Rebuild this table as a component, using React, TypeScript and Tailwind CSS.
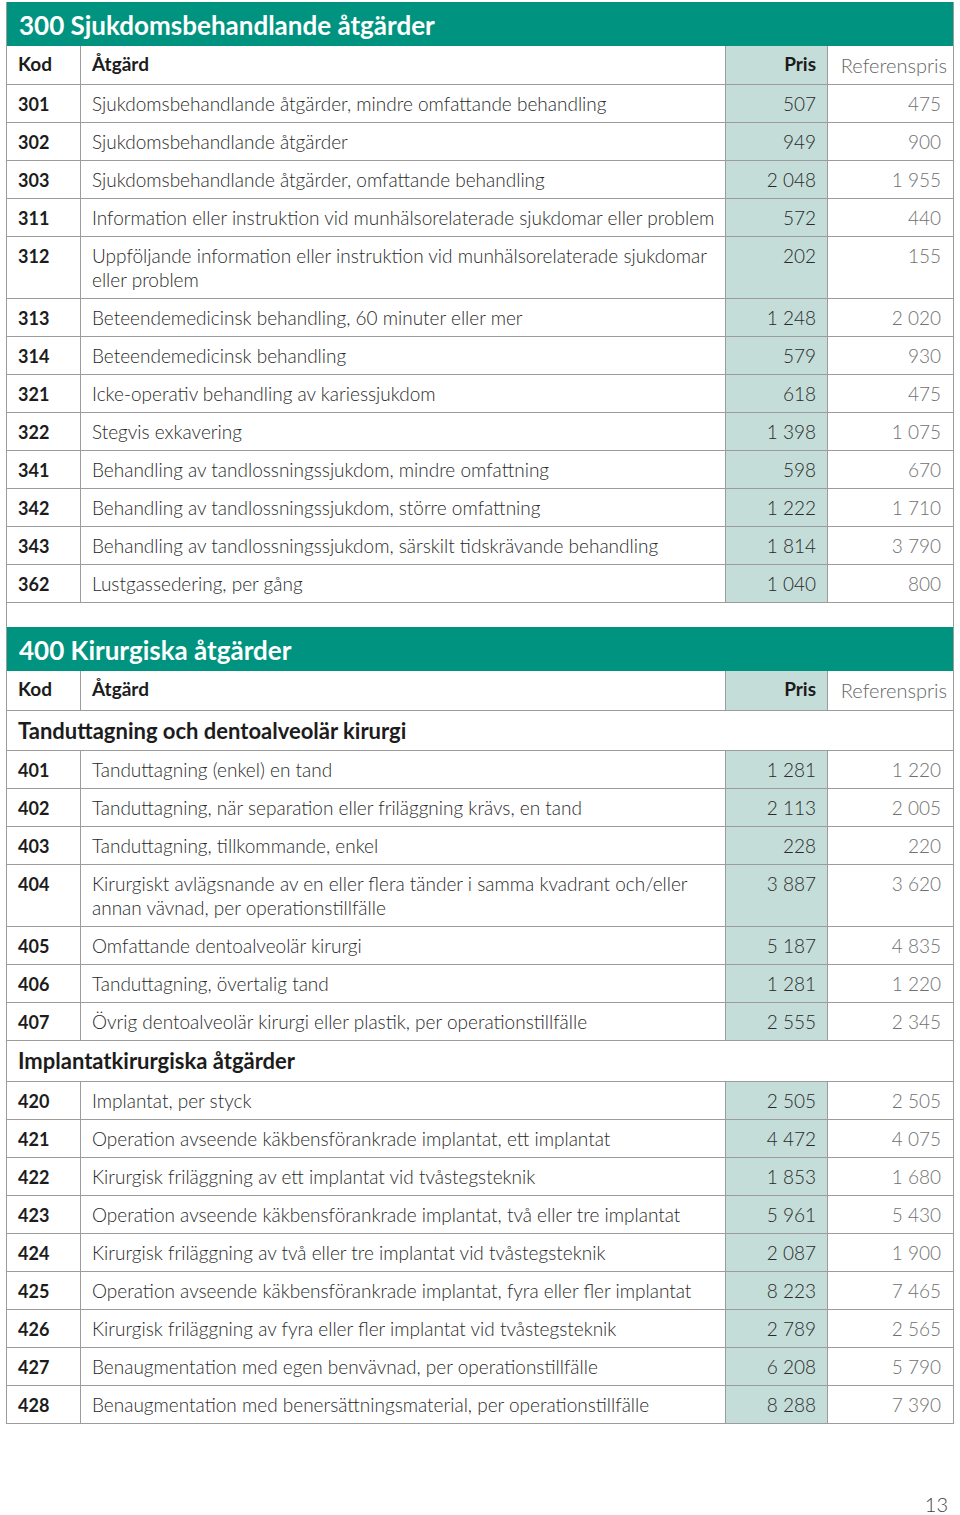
type Row = { kod: string; text: string; pris: string; ref: string };
type Item = Row | { sub: string; tall?: boolean };

const sec300: Item[] = [
  { kod: "301", text: "Sjukdomsbehandlande åtgärder, mindre omfattande behandling", pris: "507", ref: "475" },
  { kod: "302", text: "Sjukdomsbehandlande åtgärder", pris: "949", ref: "900" },
  { kod: "303", text: "Sjukdomsbehandlande åtgärder, omfattande behandling", pris: "2 048", ref: "1 955" },
  { kod: "311", text: "Information eller instruktion vid munhälsorelaterade sjukdomar eller problem", pris: "572", ref: "440" },
  { kod: "312", text: "Uppföljande information eller instruktion vid munhälsorelaterade sjukdomar eller problem", pris: "202", ref: "155" },
  { kod: "313", text: "Beteendemedicinsk behandling, 60 minuter eller mer", pris: "1 248", ref: "2 020" },
  { kod: "314", text: "Beteendemedicinsk behandling", pris: "579", ref: "930" },
  { kod: "321", text: "Icke-operativ behandling av kariessjukdom", pris: "618", ref: "475" },
  { kod: "322", text: "Stegvis exkavering", pris: "1 398", ref: "1 075" },
  { kod: "341", text: "Behandling av tandlossningssjukdom, mindre omfattning", pris: "598", ref: "670" },
  { kod: "342", text: "Behandling av tandlossningssjukdom, större omfattning", pris: "1 222", ref: "1 710" },
  { kod: "343", text: "Behandling av tandlossningssjukdom, särskilt tidskrävande behandling", pris: "1 814", ref: "3 790" },
  { kod: "362", text: "Lustgassedering, per gång", pris: "1 040", ref: "800" },
];

const sec400: Item[] = [
  { sub: "Tanduttagning och dentoalveolär kirurgi" },
  { kod: "401", text: "Tanduttagning (enkel) en tand", pris: "1 281", ref: "1 220" },
  { kod: "402", text: "Tanduttagning, när separation eller friläggning krävs, en tand", pris: "2 113", ref: "2 005" },
  { kod: "403", text: "Tanduttagning, tillkommande, enkel", pris: "228", ref: "220" },
  { kod: "404", text: "Kirurgiskt avlägsnande av en eller flera tänder i samma kvadrant och/eller annan vävnad, per operationstillfälle", pris: "3 887", ref: "3 620" },
  { kod: "405", text: "Omfattande dentoalveolär kirurgi", pris: "5 187", ref: "4 835" },
  { kod: "406", text: "Tanduttagning, övertalig tand", pris: "1 281", ref: "1 220" },
  { kod: "407", text: "Övrig dentoalveolär kirurgi eller plastik, per operationstillfälle", pris: "2 555", ref: "2 345" },
  { sub: "Implantatkirurgiska åtgärder", tall: true },
  { kod: "420", text: "Implantat, per styck", pris: "2 505", ref: "2 505" },
  { kod: "421", text: "Operation avseende käkbensförankrade implantat, ett implantat", pris: "4 472", ref: "4 075" },
  { kod: "422", text: "Kirurgisk friläggning av ett implantat vid tvåstegsteknik", pris: "1 853", ref: "1 680" },
  { kod: "423", text: "Operation avseende käkbensförankrade implantat, två eller tre implantat", pris: "5 961", ref: "5 430" },
  { kod: "424", text: "Kirurgisk friläggning av två eller tre implantat vid tvåstegsteknik", pris: "2 087", ref: "1 900" },
  { kod: "425", text: "Operation avseende käkbensförankrade implantat, fyra eller fler implantat", pris: "8 223", ref: "7 465" },
  { kod: "426", text: "Kirurgisk friläggning av fyra eller fler implantat vid tvåstegsteknik", pris: "2 789", ref: "2 565" },
  { kod: "427", text: "Benaugmentation med egen benvävnad, per operationstillfälle", pris: "6 208", ref: "5 790" },
  { kod: "428", text: "Benaugmentation med benersättningsmaterial, per operationstillfälle", pris: "8 288", ref: "7 390" },
];

const grid = "grid grid-cols-[74px_645px_102px_1fr] border-b border-[#9c9c9c]";

function HeaderRow({ tall }: { tall?: boolean }) {
  return (
    <div className={`${grid} ${tall ? "h-[40px]" : "h-[39px]"}`}>
      <div className="border-r border-[#9c9c9c] pl-[11px] pt-[6px] text-[19px] font-bold leading-[24px] text-[#1c1c1c]">Kod</div>
      <div className="border-r border-[#9c9c9c] pl-[11px] pt-[6px] text-[19px] font-bold leading-[24px] text-[#1c1c1c]">Åtgärd</div>
      <div className="border-r border-[#9c9c9c] bg-[#c4ddd8] pr-[11px] pt-[6px] text-right text-[19px] font-bold leading-[24px] text-[#1c1c1c]">Pris</div>
      <div className="pr-[6px] pt-[7px] text-right text-[20px] font-light leading-[24px] text-[#666]">Referenspris</div>
    </div>
  );
}

function Body({ items }: { items: Item[] }) {
  return (
    <>
      {items.map((it, i) =>
        "sub" in it ? (
          <div
            key={i}
            className={`${it.tall ? "h-[41px]" : "h-[40px]"} border-b border-[#9c9c9c] pl-[11px] pt-[7px] text-[22px] font-bold leading-[26px] text-[#1c1c1c]`}
          >
            {it.sub}
          </div>
        ) : (
          <div key={i} className={grid}>
            <div className="border-r border-[#9c9c9c] pb-[6px] pl-[11px] pt-[7px] text-[18px] font-bold leading-[24px] text-[#1c1c1c]">{it.kod}</div>
            <div className="border-r border-[#9c9c9c] pb-[6px] pl-[11px] pr-[8px] pt-[7px] text-[19px] font-light leading-[24px] text-[#2a2a2a]">{it.text}</div>
            <div className="border-r border-[#9c9c9c] bg-[#c4ddd8] pb-[6px] pr-[11px] pt-[7px] text-right text-[19px] font-light leading-[24px] text-[#2a2a2a]">{it.pris}</div>
            <div className="pb-[6px] pr-[12px] pt-[7px] text-right text-[19px] font-light leading-[24px] text-[#707070]">{it.ref}</div>
          </div>
        )
      )}
    </>
  );
}

function Title({ children }: { children: string }) {
  return (
    <div className="h-[44px] bg-[#009480] pl-[12px] pt-[7px] text-[26px] font-bold leading-[32px] text-white">
      {children}
    </div>
  );
}

export default function App() {
  return (
    <div className="relative h-[1515px] w-[960px] bg-white px-[6px] pt-[2px]" style={{ fontFamily: "Lato, 'Open Sans', sans-serif" }}>
      <div className="border-x border-[#9c9c9c]">
        <Title>300 Sjukdomsbehandlande åtgärder</Title>
        <HeaderRow />
        <Body items={sec300} />
        <div className="h-[24px]" />
        <Title>400 Kirurgiska åtgärder</Title>
        <HeaderRow tall />
        <Body items={sec400} />
      </div>
      <div className="mt-[68px] pr-[6px] text-right text-[20px] font-light leading-[24px] text-[#444]">13</div>
    </div>
  );
}
